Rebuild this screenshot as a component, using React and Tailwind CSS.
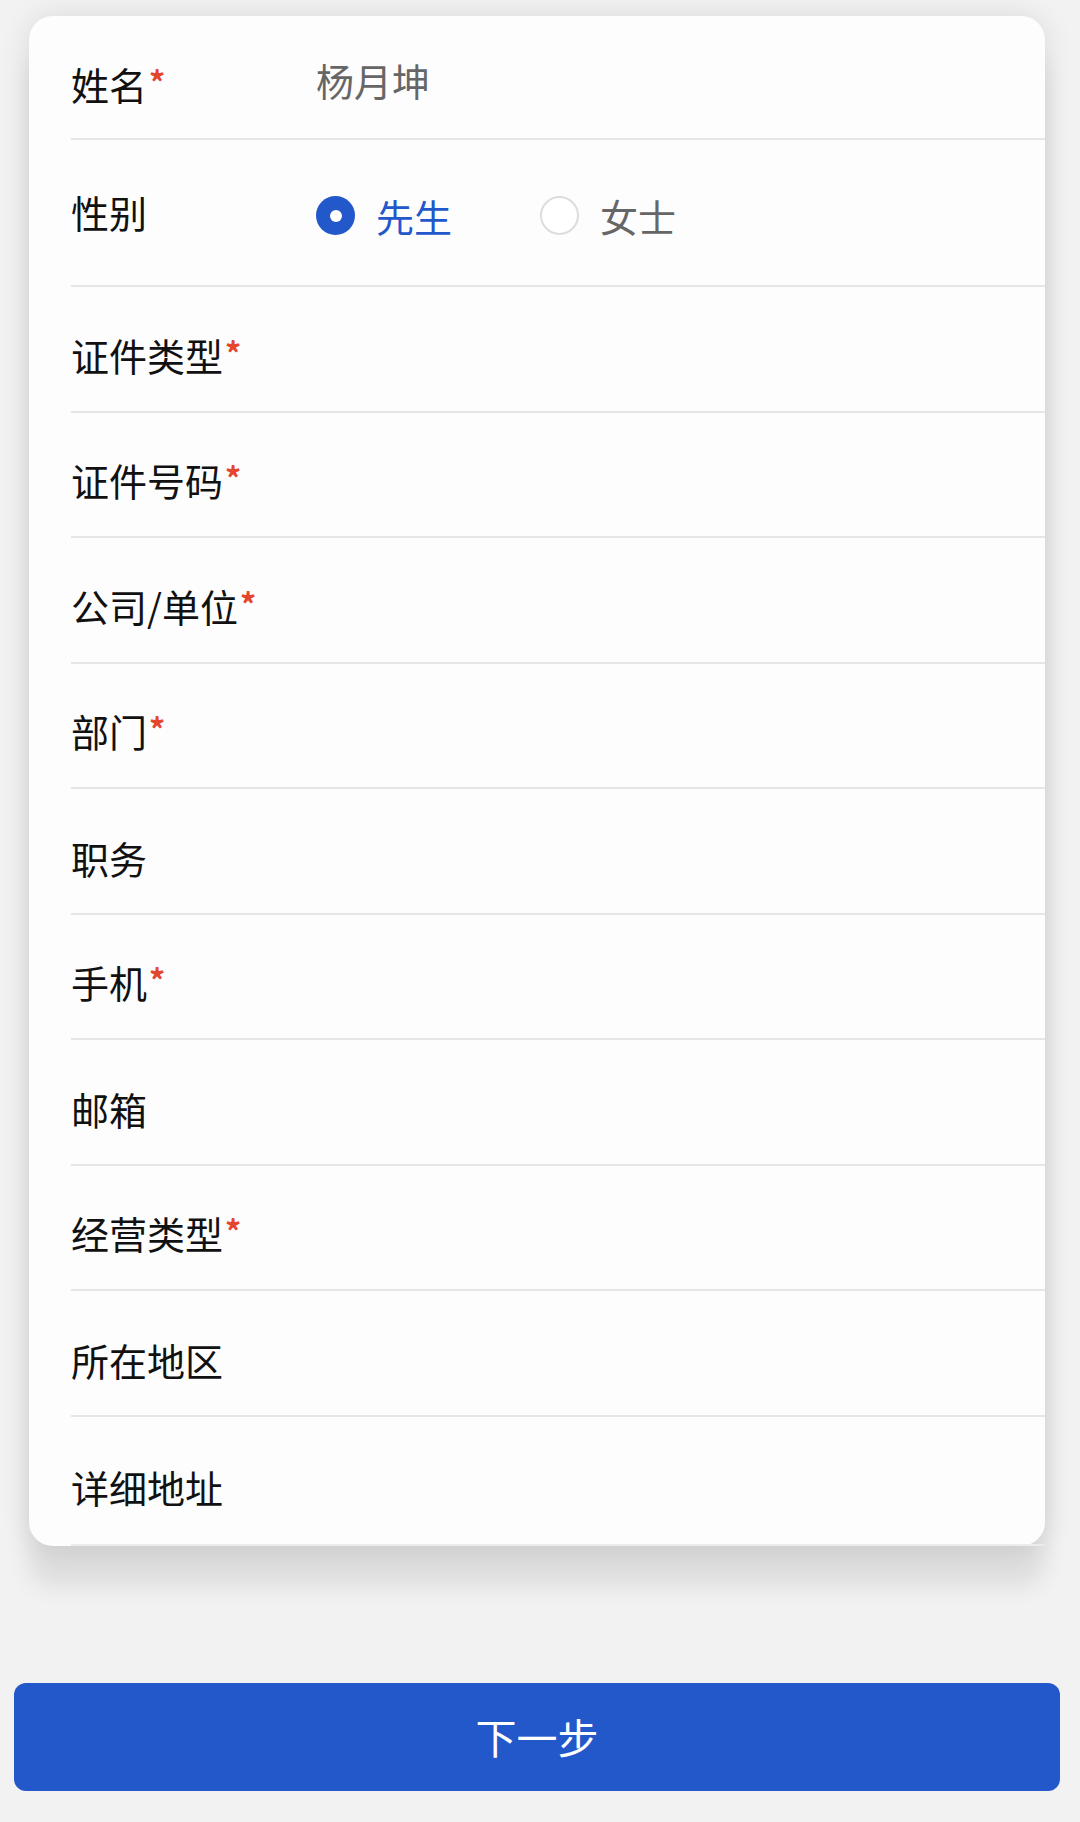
import { useState } from "react";

const FONT = { fontFamily: '"Noto Sans CJK SC", "Noto Sans", sans-serif' };

const fields = [
  { label: "证件类型", required: true },
  { label: "证件号码", required: true },
  { label: "公司/单位", required: true },
  { label: "部门", required: true },
  { label: "职务" },
  { label: "手机", required: true },
  { label: "邮箱" },
  { label: "经营类型", required: true },
  { label: "所在地区" },
];

function Label({ text, required, className = "" }) {
  return (
    <div className={"w-[245px] shrink-0 text-[38px] leading-[56px] text-[#111] " + className}>
      {text}
      {required && (
        <span className="relative -top-[5px] ml-[2px] text-[32px] font-bold text-[#e4452d]">*</span>
      )}
    </div>
  );
}

function Radio({ checked, label, onClick }) {
  return (
    <button type="button" onClick={onClick} className="flex items-center gap-[21px]">
      {checked ? (
        <span className="flex h-[39px] w-[39px] items-center justify-center rounded-full bg-[#2358cb]">
          <span className="h-[12px] w-[12px] rounded-full bg-white" />
        </span>
      ) : (
        <span className="h-[39px] w-[39px] rounded-full border-2 border-[#dcdcdc] bg-white" />
      )}
      <span className={"text-[38px] leading-[56px] " + (checked ? "text-[#2358cb]" : "text-[#666]")}>{label}</span>
    </button>
  );
}

export default function App() {
  const [gender, setGender] = useState("male");

  return (
    <div className="min-h-screen bg-[#f2f2f2] pt-[16px] pb-[31px]" style={FONT}>
      <div className="ml-[29px] w-[1016px] rounded-[24px] bg-[#fdfdfd] shadow-[0_40px_24px_rgba(0,0,0,0.09),0_0_30px_rgba(0,0,0,0.1)]">
        <div className="ml-[42px] flex h-[124px] items-center border-b-2 border-[#e6e6e6]">
          <Label text="姓名" required className="mt-[16px]" />
          <div className="mt-[6px] text-[38px] leading-[56px] text-[#666]">杨月坤</div>
        </div>

        <div className="ml-[42px] flex h-[147px] items-center border-b-2 border-[#e6e6e6]">
          <Label text="性别" className="-mt-[2px]" />
          <div className="mt-[6px] flex items-center gap-[88px]">
            <Radio checked={gender === "male"} label="先生" onClick={() => setGender("male")} />
            <Radio checked={gender === "female"} label="女士" onClick={() => setGender("female")} />
          </div>
        </div>

        {fields.map((f) => (
          <div key={f.label} className="ml-[42px] flex h-[125.5px] items-center border-b-2 border-[#e6e6e6]">
            <Label text={f.label} required={f.required} className="mt-[14px]" />
          </div>
        ))}

        <div className="ml-[42px] flex h-[129.5px] items-center border-b-2 border-[#ececec]">
          <Label text="详细地址" className="mt-[14px]" />
        </div>
      </div>

      <button
        type="button"
        className="mt-[137px] ml-[14px] flex h-[108px] w-[1046px] items-center justify-center rounded-[12px] bg-[#2358cb] text-[41px] text-white"
      >
        下一步
      </button>
    </div>
  );
}
